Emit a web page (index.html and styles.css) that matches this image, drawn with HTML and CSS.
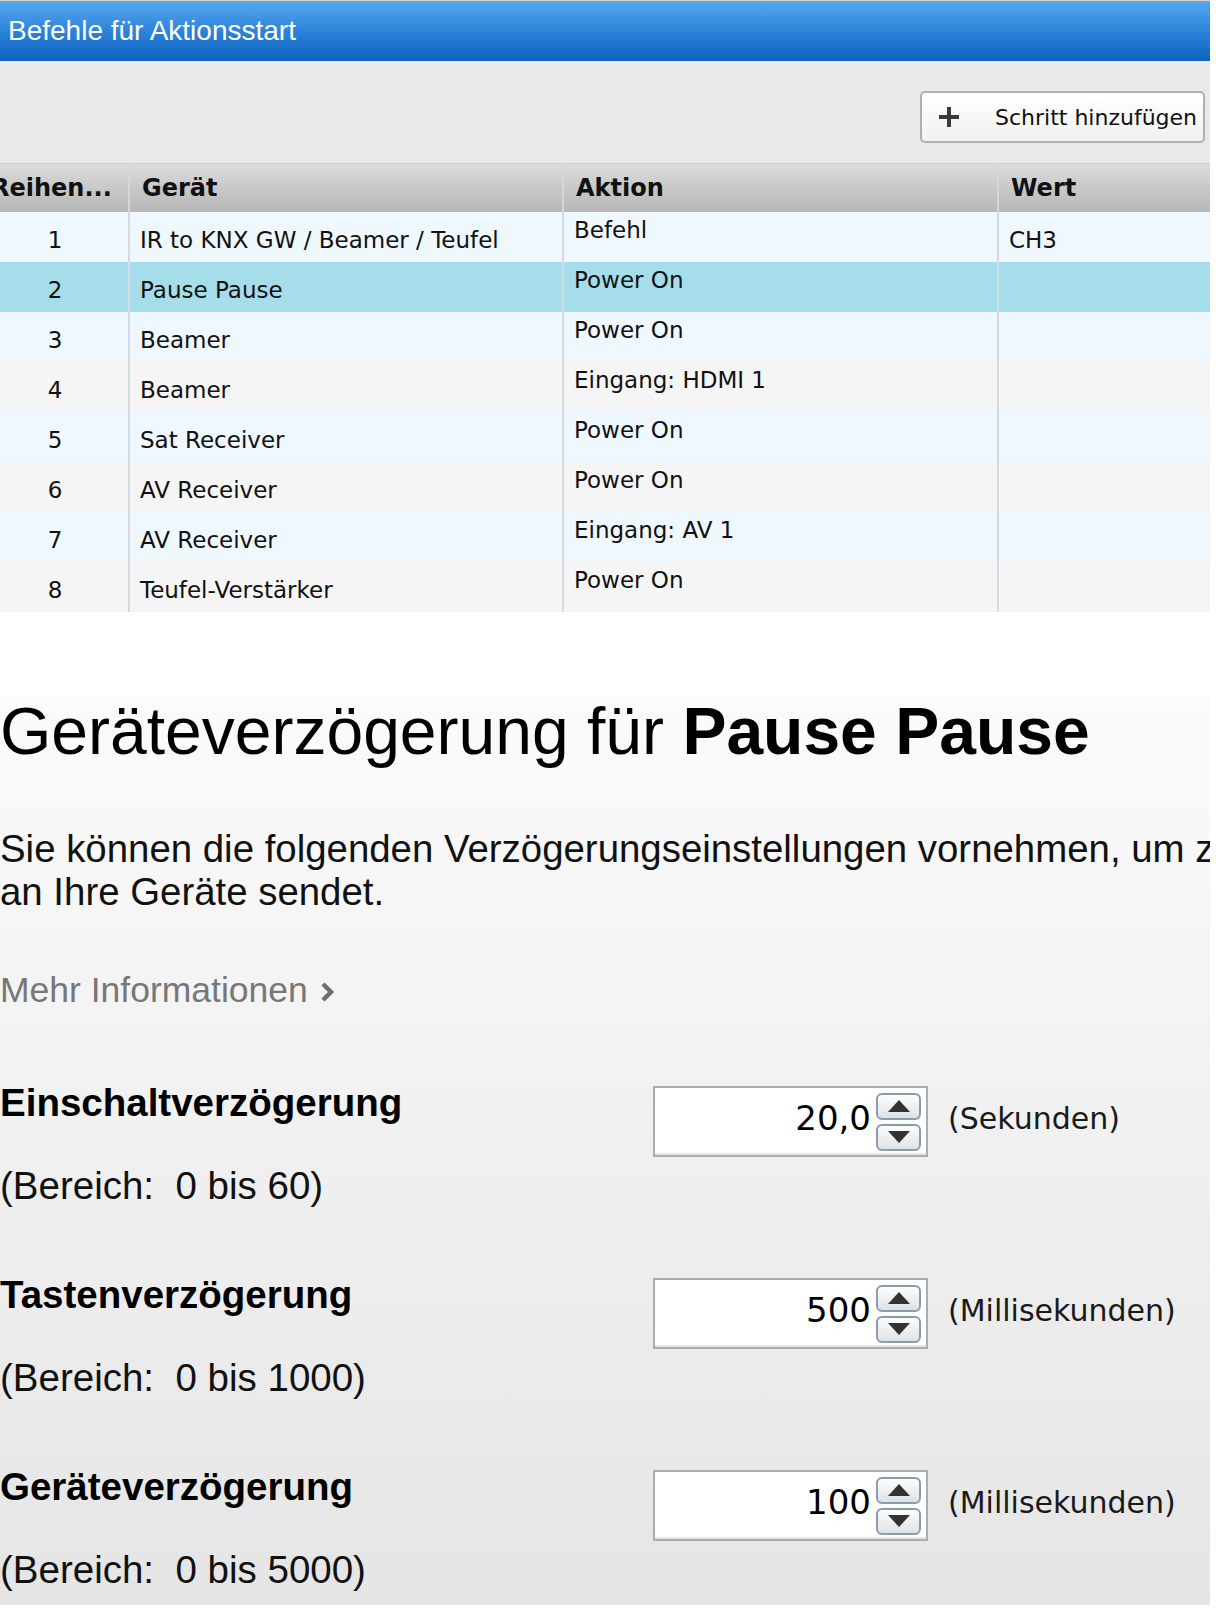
FILE: index.html
```html
<!DOCTYPE html>
<html lang="de">
<head>
    <meta charset="UTF-8">
    <meta name="viewport" content="width=device-width, initial-scale=1.0">
    <title>Befehle für Aktionsstart</title>
    <link rel="stylesheet" href="styles.css">
</head>
<body>
    <div class="page">
        <div class="titlebar">Befehle für Aktionsstart</div>

        <div class="toolbar">
            <button class="add-step">
                <svg width="22" height="22" viewBox="0 0 22 22"><rect x="9" y="1" width="4" height="20" fill="#3a3a3a"/><rect x="1" y="9" width="20" height="4" fill="#3a3a3a"/></svg>
                <span>Schritt hinzufügen</span>
            </button>
        </div>

        <div class="grid-wrap">
            <table class="steps">
                <colgroup>
                    <col class="col-nr">
                    <col class="col-dev">
                    <col class="col-act">
                    <col class="col-val">
                </colgroup>
                <thead>
                    <tr>
                        <th class="nr-head">Reihen...</th>
                        <th>Gerät</th>
                        <th>Aktion</th>
                        <th>Wert</th>
                    </tr>
                </thead>
                <tbody>
                    <tr><td class="nr">1</td><td>IR to KNX GW / Beamer / Teufel</td><td class="act">Befehl</td><td>CH3</td></tr>
                    <tr class="selected"><td class="nr">2</td><td>Pause Pause</td><td class="act">Power On</td><td></td></tr>
                    <tr><td class="nr">3</td><td>Beamer</td><td class="act">Power On</td><td></td></tr>
                    <tr><td class="nr">4</td><td>Beamer</td><td class="act">Eingang: HDMI 1</td><td></td></tr>
                    <tr><td class="nr">5</td><td>Sat Receiver</td><td class="act">Power On</td><td></td></tr>
                    <tr><td class="nr">6</td><td>AV Receiver</td><td class="act">Power On</td><td></td></tr>
                    <tr><td class="nr">7</td><td>AV Receiver</td><td class="act">Eingang: AV 1</td><td></td></tr>
                    <tr><td class="nr">8</td><td>Teufel-Verstärker</td><td class="act">Power On</td><td></td></tr>
                </tbody>
            </table>
        </div>

        <section class="delay-panel">
            <h1>Geräteverzögerung für <b>Pause Pause</b></h1>
            <p class="intro">Sie können die folgenden Verzögerungseinstellungen vornehmen, um zu steuern, wie schnell die Fernbedienung Befehle<br>an Ihre Geräte sendet.</p>
            <a class="more" href="#">Mehr Informationen <svg width="16" height="22" viewBox="0 0 16 22"><polyline points="3,3 11,11 3,19" fill="none" stroke="#6f6f6f" stroke-width="4.5"/></svg></a>

            <div class="setting">
                <div class="setting-text">
                    <h3>Einschaltverzögerung</h3>
                    <div class="range">(Bereich:&nbsp; 0 bis 60)</div>
                </div>
                <div class="spinner">
                    <span class="value">20,0</span>
                    <span class="spin"><span class="spin-btn up"></span><span class="spin-btn down"></span></span>
                </div>
                <span class="unit">(Sekunden)</span>
            </div>

            <div class="setting">
                <div class="setting-text">
                    <h3>Tastenverzögerung</h3>
                    <div class="range">(Bereich:&nbsp; 0 bis 1000)</div>
                </div>
                <div class="spinner">
                    <span class="value">500</span>
                    <span class="spin"><span class="spin-btn up"></span><span class="spin-btn down"></span></span>
                </div>
                <span class="unit">(Millisekunden)</span>
            </div>

            <div class="setting">
                <div class="setting-text">
                    <h3>Geräteverzögerung</h3>
                    <div class="range">(Bereich:&nbsp; 0 bis 5000)</div>
                </div>
                <div class="spinner">
                    <span class="value">100</span>
                    <span class="spin"><span class="spin-btn up"></span><span class="spin-btn down"></span></span>
                </div>
                <span class="unit">(Millisekunden)</span>
            </div>
        </section>
    </div>
</body>
</html>
```

FILE: styles.css
```css
body {
    margin: 0;
    background: #fff;
    font-family: "DejaVu Sans", Verdana, sans-serif;
    color: #111;
}
.page { width: 1210px; overflow: hidden; }

.titlebar {
    height: 60px;
    line-height: 60px;
    padding-left: 8px;
    border-top: 1px solid #d4d4d4;
    background: linear-gradient(#57a8ef, #2a80d8 55%, #0c63c0);
    color: #fff;
    font-family: "Liberation Sans", Arial, sans-serif;
    font-size: 28px;
}

.toolbar {
    height: 102px;
    background: #e9e9e9;
    display: flex;
    justify-content: flex-end;
    align-items: flex-start;
    padding: 30px 5px 0 0;
    box-sizing: border-box;
}
.add-step {
    width: 285px;
    height: 52px;
    box-sizing: border-box;
    display: flex;
    align-items: center;
    padding: 0 4px 0 16px;
    border: 2px solid #a8b1ba;
    border-radius: 5px;
    background: linear-gradient(#ffffff, #f1f1f1);
    font-family: "DejaVu Sans", Verdana, sans-serif;
    font-size: 22px;
    color: #111;
    white-space: nowrap;
}
.add-step svg { margin-right: 35px; flex: none; }

.grid-wrap { border-top: 1px solid #c6ced6; }
.steps {
    margin-left: -22px;
    border-collapse: collapse;
    table-layout: fixed;
    width: 1232px;
    font-size: 23px;
}
.col-nr { width: 151px; }
.col-dev { width: 434px; }
.col-act { width: 435px; }
.col-val { width: 212px; }
.steps th {
    height: 48px;
    padding: 0 12px;
    box-sizing: border-box;
    text-align: left;
    font-size: 24px;
    font-weight: bold;
    white-space: nowrap;
    overflow: hidden;
    background: linear-gradient(#dcdcdc, #b6b6b6);
    border-left: 2px solid #d2d8de;
}
.steps th.nr-head { padding-left: 13px; border-left: none; }
.steps td {
    height: 50px;
    padding: 6px 10px 0;
    box-sizing: border-box;
    vertical-align: middle;
    white-space: nowrap;
    overflow: hidden;
    border-left: 2px solid #d4dbe2;
}
.steps td.nr { text-align: center; padding-left: 14px; border-left: none; }
.steps td.act { vertical-align: top; padding-top: 5px; }
.steps tbody tr:nth-child(odd) { background: #eff7ff; }
.steps tbody tr:nth-child(even) { background: #f5f5f5; }
.steps tbody tr.selected { background: #a5ddeb; }

.delay-panel {
    display: flow-root;
    margin-top: 85px;
    padding-bottom: 13px;
    background: linear-gradient(#fbfbfb, #e5e5e5);
    font-family: "Liberation Sans", Arial, sans-serif;
    white-space: nowrap;
}
.delay-panel h1 {
    margin: -3px 0 0;
    font-size: 66px;
    line-height: 74px;
    font-weight: normal;
    color: #000;
}
.intro {
    margin: 59px 0 0;
    font-size: 38.4px;
    line-height: 43px;
    color: #111;
    overflow: hidden;
}
.more {
    display: flex;
    align-items: center;
    gap: 12px;
    margin-top: 57px;
    font-size: 35.5px;
    line-height: 40px;
    color: #777;
    text-decoration: none;
}
.more svg { margin-top: 3px; }

.setting {
    display: grid;
    grid-template-columns: 653px 275px auto;
    align-items: start;
    margin-top: 71px;
}
.setting + .setting { margin-top: 65px; }
.setting h3 {
    margin: 0;
    font-size: 38.5px;
    line-height: 44px;
    color: #000;
}
.range {
    margin-top: 39px;
    font-size: 38.5px;
    line-height: 44px;
    color: #111;
}

.spinner {
    margin-top: 5px;
    height: 71px;
    box-sizing: border-box;
    display: flex;
    align-items: center;
    padding: 0 5px 0 0;
    border: 2px solid #a4aeb8;
    box-shadow: inset 0 -2px 0 #e6e6e6;
    background: #fff;
    font-family: "DejaVu Sans", Verdana, sans-serif;
}
.spinner .value {
    flex: 1;
    text-align: right;
    padding: 0 5px 8px 0;
    font-size: 34px;
    color: #000;
}
.spin {
    display: flex;
    flex-direction: column;
    gap: 4px;
}
.spin-btn {
    width: 45px;
    height: 27px;
    box-sizing: border-box;
    border: 2px solid #8d9aa8;
    border-radius: 6px;
    background: linear-gradient(#fdfdfd, #dde2e7);
    display: flex;
    align-items: center;
    justify-content: center;
}
.spin-btn::after {
    content: "";
    border-left: 11px solid transparent;
    border-right: 11px solid transparent;
}
.spin-btn.up::after { border-bottom: 12px solid #333; }
.spin-btn.down::after { border-top: 12px solid #333; }

.unit {
    margin: 18px 0 0 20px;
    font-family: "DejaVu Sans", Verdana, sans-serif;
    font-size: 30px;
    line-height: 40px;
    color: #1a1a1a;
}
```
